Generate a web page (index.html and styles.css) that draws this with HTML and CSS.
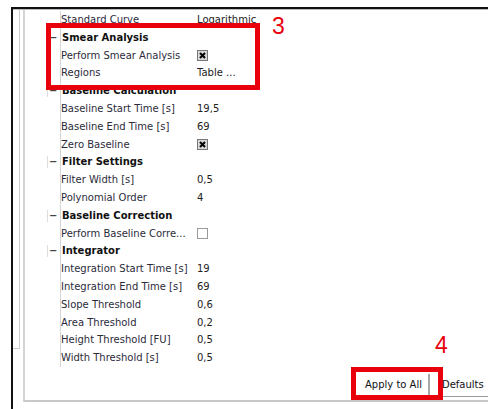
FILE: index.html
```html
<!DOCTYPE html>
<html>
<head>
<meta charset="utf-8">
<link rel="stylesheet" href="styles.css">
</head>
<body>
<div class="window">
  <div class="frame">
    <div class="side"></div>
    <div class="panel">
      <div class="tree">
        <div class="row"><span class="exp"></span><span class="label">Standard Curve</span><span class="value">Logarithmic</span></div>
        <div class="row head"><span class="exp">−</span><span class="label">Smear Analysis</span></div>
        <div class="row"><span class="exp"></span><span class="label">Perform Smear Analysis</span><span class="value"><span class="check on"><svg width="11" height="11" viewBox="0 0 11 11"><path d="M3 3 L8 8 M8 3 L3 8" stroke="#000" stroke-width="2"/></svg></span></span></div>
        <div class="row"><span class="exp"></span><span class="label">Regions</span><span class="value">Table ...</span></div>
        <div class="row head"><span class="exp">−</span><span class="label">Baseline Calculation</span></div>
        <div class="row"><span class="exp"></span><span class="label">Baseline Start Time [s]</span><span class="value">19,5</span></div>
        <div class="row"><span class="exp"></span><span class="label">Baseline End Time [s]</span><span class="value">69</span></div>
        <div class="row"><span class="exp"></span><span class="label">Zero Baseline</span><span class="value"><span class="check on"><svg width="11" height="11" viewBox="0 0 11 11"><path d="M3 3 L8 8 M8 3 L3 8" stroke="#000" stroke-width="2"/></svg></span></span></div>
        <div class="row head"><span class="exp">−</span><span class="label">Filter Settings</span></div>
        <div class="row"><span class="exp"></span><span class="label">Filter Width [s]</span><span class="value">0,5</span></div>
        <div class="row"><span class="exp"></span><span class="label">Polynomial Order</span><span class="value">4</span></div>
        <div class="row head"><span class="exp">−</span><span class="label">Baseline Correction</span></div>
        <div class="row"><span class="exp"></span><span class="label">Perform Baseline Corre...</span><span class="value"><span class="check"></span></span></div>
        <div class="row head"><span class="exp">−</span><span class="label">Integrator</span></div>
        <div class="row"><span class="exp"></span><span class="label">Integration Start Time [s]</span><span class="value">19</span></div>
        <div class="row"><span class="exp"></span><span class="label">Integration End Time [s]</span><span class="value">69</span></div>
        <div class="row"><span class="exp"></span><span class="label">Slope Threshold</span><span class="value">0,6</span></div>
        <div class="row"><span class="exp"></span><span class="label">Area Threshold</span><span class="value">0,2</span></div>
        <div class="row"><span class="exp"></span><span class="label">Height Threshold [FU]</span><span class="value">0,5</span></div>
        <div class="row"><span class="exp"></span><span class="label">Width Threshold [s]</span><span class="value">0,5</span></div>
      </div>
      <div class="buttons">
        <div class="btn apply">Apply to All</div>
        <div class="btn defaults">Defaults</div>
      </div>
    </div>
  </div>
  <div class="mark mark-box smear"></div>
  <div class="mark mark-num num-3">3</div>
  <div class="mark mark-box apply-box"></div>
  <div class="mark mark-num num-4">4</div>
</div>
</body>
</html>
```

FILE: styles.css
```css
html, body {
  margin: 0;
  padding: 0;
  background: #fff;
}

body {
  width: 488px;
  height: 409px;
  overflow: hidden;
  font-family: "DejaVu Sans", Tahoma, sans-serif;
  font-size: 10px;
  color: #222;
}

.window {
  position: relative;
  margin: 7px 0 0 11px;
  height: 402px;
  border-top: 2px solid #111;
  border-left: 2px solid #111;
}

.frame {
  display: flex;
  height: 392px;
  border-top: 1px solid #bbb;
}

.side {
  width: 6px;
  height: 338px;
  border-right: 1px solid #ccc;
  border-bottom: 1px solid #ccc;
  margin-right: 3px;
}

.panel {
  flex: 1;
  display: flex;
  flex-direction: column;
  border-left: 2px solid #d4d4d4;
  border-bottom: 2px solid #c8c8c8;
}

.tree {
  padding: 1px 0 0 22px;
}

.row {
  display: flex;
  height: 17.8px;
  line-height: 17.8px;
  white-space: nowrap;
}

.exp {
  width: 13px;
  flex: none;
  font-weight: bold;
  color: #444;
}

.head .exp {
  box-sizing: border-box;
  border-left: 1px solid #ddd;
  padding-left: 1px;
  height: 12px;
  margin-top: 3px;
  line-height: 11px;
}

.label {
  width: 136px;
  flex: none;
  border-left: 1px solid #d6d6d6;
  padding-left: 0;
  overflow: hidden;
  color: #2b2b3a;
}

.head .label {
  font-weight: bold;
  color: #111;
  padding-left: 1px;
}

.value {
  width: 62px;
  overflow: hidden;
  color: #222;
  display: flex;
  align-items: center;
}

.check {
  display: block;
  box-sizing: border-box;
  width: 11px;
  height: 11px;
  border: 1px solid #9a9a9a;
  background: #fff;
}

.check.on {
  background: #d8d8d8;
  border-color: #777;
}

.check svg {
  display: block;
  margin: -1px;
}

.buttons {
  margin-top: auto;
  display: flex;
  justify-content: flex-end;
  padding-bottom: 3px;
}

.btn {
  height: 22px;
  line-height: 22px;
  font-size: 10px;
  color: #111;
  background: #fff;
}

.apply {
  padding: 0 6px 0 11px;
  border-right: 2px solid #a8a8a8;
  border-bottom: 1px solid #c4c4c4;
  border-bottom-left-radius: 3px;
  margin-right: 12px;
}

.defaults {
  width: 46px;
  padding-left: 0;
  border-bottom: 1px solid #999;
}

.mark {
  position: absolute;
}

.mark-box {
  border: 5px solid #e8000c;
}

.smear {
  left: 33px;
  top: 14px;
  width: 204px;
  height: 57px;
}

.apply-box {
  left: 338px;
  top: 358px;
  width: 82px;
  height: 23px;
}

.mark-num {
  font-family: "Liberation Sans", Arial, sans-serif;
  font-size: 23px;
  line-height: 23px;
  color: #e8000c;
}

.num-3 {
  left: 259px;
  top: 6px;
}

.num-4 {
  left: 422px;
  top: 325px;
}
```
